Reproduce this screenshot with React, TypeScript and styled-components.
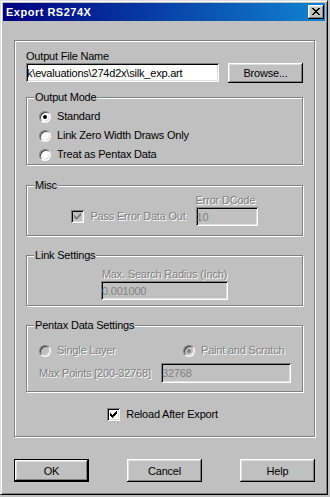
import * as React from "react";
import styled, { createGlobalStyle } from "styled-components";

const GlobalStyle = createGlobalStyle`
  html, body {
    margin: 0;
    padding: 0;
    background: #c0c0c0;
  }
  body {
    font-family: "Liberation Sans", Arial, sans-serif;
    font-size: 11px;
    letter-spacing: -0.2px;
    color: #000;
  }
`;

const Window = styled.div`
  box-sizing: border-box;
  width: 328px;
  height: 495px;
  padding: 2px;
  background: #c0c0c0;
  border: 1px solid;
  border-color: #dfdfdf #000 #000 #dfdfdf;
  box-shadow: inset 1px 1px #fff, inset -1px -1px #808080;
  display: flex;
  flex-direction: column;
`;

const TitleBar = styled.div`
  height: 18px;
  display: flex;
  align-items: center;
  justify-content: space-between;
  padding: 0 1px 0 3px;
  background: linear-gradient(to right, #000080, #1084d0);
`;

const Title = styled.span`
  color: #fff;
  font-weight: bold;
  font-size: 11px;
  letter-spacing: 0.5px;
  line-height: 18px;
`;

const Raised = `
  box-shadow: inset -1px -1px #000, inset 1px 1px #fff, inset -2px -2px #808080, inset 2px 2px #dfdfdf;
`;

const CloseButton = styled.div`
  width: 16px;
  height: 14px;
  box-sizing: border-box;
  background: #c0c0c0;
  ${Raised}
  display: flex;
  align-items: center;
  justify-content: center;
  padding: 0 0 1px 0;
`;

const Body = styled.div`
  padding: 19px 10px 0 11px;
  display: flex;
  flex-direction: column;
`;

const Group = styled.div<{ $top?: number; $pad: string; $w?: number }>`
  position: relative;
  box-sizing: border-box;
  width: ${(p) => (p.$w ? `${p.$w}px` : "auto")};
  border: 1px solid #808080;
  box-shadow: inset 1px 1px #fff, 1px 1px #fff;
  margin-top: ${(p) => p.$top ?? 0}px;
  padding: ${(p) => p.$pad};
  display: flex;
  flex-direction: column;
`;

const Legend = styled.span`
  position: absolute;
  top: -7px;
  left: 7px;
  padding: 0 1px;
  line-height: 13px;
  background: #c0c0c0;
`;

const Label = styled.div<{ $disabled?: boolean }>`
  line-height: 13px;
  white-space: nowrap;
  color: ${(p) => (p.$disabled ? "#808080" : "#000")};
  text-shadow: ${(p) => (p.$disabled ? "1px 1px 0 #fff" : "none")};
`;

const Edit = styled.input<{ $w: number; $h?: number; $disabled?: boolean }>`
  box-sizing: border-box;
  width: ${(p) => p.$w}px;
  height: ${(p) => p.$h ?? 19}px;
  border: none;
  outline: none;
  margin: 0;
  padding: 0 2px 0 1px;
  font: inherit;
  letter-spacing: inherit;
  color: ${(p) => (p.$disabled ? "#808080" : "#000")};
  background: ${(p) => (p.$disabled ? "#c0c0c0" : "#fff")};
  box-shadow: inset 1px 1px #808080, inset -1px -1px #fff, inset 2px 2px #000, inset -2px -2px #dfdfdf;
`;

const Button = styled.div<{ $w: number; $h: number; $default?: boolean }>`
  box-sizing: border-box;
  width: ${(p) => p.$w}px;
  height: ${(p) => p.$h}px;
  background: #c0c0c0;
  border: ${(p) => (p.$default ? "1px solid #000" : "none")};
  ${Raised}
  display: flex;
  align-items: center;
  justify-content: center;
  font-size: 11px;
`;

const FileRow = styled.div`
  display: flex;
  align-items: flex-start;
  justify-content: space-between;
`;

const OptionRow = styled.div<{ $h?: number }>`
  display: flex;
  align-items: center;
  gap: 6px;
  height: ${(p) => p.$h ?? 19}px;
`;

const RadioCircle = styled.span<{ $disabled?: boolean }>`
  box-sizing: border-box;
  width: 12px;
  height: 12px;
  border-radius: 50%;
  border: 1px solid;
  border-color: #808080 #fff #fff #808080;
  box-shadow: inset 1px 1px #404040, inset -1px -1px #dfdfdf;
  background: ${(p) => (p.$disabled ? "#c0c0c0" : "#fff")};
  display: flex;
  align-items: center;
  justify-content: center;
  flex: none;
`;

const RadioDot = styled.span<{ $disabled?: boolean }>`
  width: 4px;
  height: 4px;
  border-radius: 50%;
  background: ${(p) => (p.$disabled ? "#808080" : "#000")};
`;

const CheckBox = styled.span<{ $disabled?: boolean }>`
  box-sizing: border-box;
  width: 13px;
  height: 13px;
  flex: none;
  background: ${(p) => (p.$disabled ? "#c0c0c0" : "#fff")};
  box-shadow: inset 1px 1px #808080, inset -1px -1px #fff, inset 2px 2px #000, inset -2px -2px #dfdfdf;
  display: block;
`;

const MiscRow = styled.div`
  display: flex;
  align-items: flex-end;
  justify-content: center;
  gap: 10px;
`;

const Column = styled.div<{ $center?: boolean }>`
  display: flex;
  flex-direction: column;
  align-items: ${(p) => (p.$center ? "center" : "flex-start")};
`;

const PentaxRadios = styled.div`
  display: grid;
  grid-template-columns: 144px auto;
  height: 19px;
`;

const PentaxPoints = styled.div`
  display: flex;
  align-items: center;
  justify-content: space-between;
  margin-top: 3px;
`;

const ReloadRow = styled.div`
  display: flex;
  justify-content: center;
  align-items: center;
  gap: 6px;
  margin-top: 16px;
  padding-right: 4px;
  height: 13px;
`;

const ButtonRow = styled.div`
  display: flex;
  justify-content: space-between;
  width: 301px;
  margin-top: 22px;
`;

const CloseGlyph = () => (
  <svg width="8" height="7" viewBox="0 0 8 7" shapeRendering="crispEdges">
    <path
      fill="#000"
      d="M0 0h2v1h-2z M6 0h2v1h-2z M1 1h2v1h-2z M5 1h2v1h-2z M2 2h4v1h-4z M3 3h2v1h-2z M2 4h4v1h-4z M1 5h2v1h-2z M5 5h2v1h-2z M0 6h2v1h-2z M6 6h2v1h-2z"
    />
  </svg>
);

const Check = ({ color }: { color: string }) => (
  <svg width="13" height="13" viewBox="0 0 13 13" shapeRendering="crispEdges">
    <path
      fill={color}
      d="M3 5h1v1h1v1h1v-1h1v-1h1v-1h1v-1h1v3h-1v1h-1v1h-1v1h-1v1h-1v-1h-1v-1h-1z"
    />
  </svg>
);

const Radio = ({ label, checked, disabled }: { label: string; checked?: boolean; disabled?: boolean }) => (
  <OptionRow>
    <RadioCircle $disabled={disabled}>{checked && <RadioDot $disabled={disabled} />}</RadioCircle>
    <Label $disabled={disabled}>{label}</Label>
  </OptionRow>
);

export default function App() {
  return (
    <>
      <GlobalStyle />
      <Window>
        <TitleBar>
          <Title>Export RS274X</Title>
          <CloseButton>
            <CloseGlyph />
          </CloseButton>
        </TitleBar>
        <Body>
          <Group $w={301} $pad="9px 11px 15px 11px">
            <Label>Output File Name</Label>
            <FileRow>
              <Edit $w={193} readOnly value="k\evaluations\274d2x\silk_exp.art" />
              <Button $w={75} $h={20}>Browse...</Button>
            </FileRow>

            <Group $top={14} $pad="9px 0 0 12px">
              <Legend>Output Mode</Legend>
              <Radio label="Standard" checked />
              <Radio label="Link Zero Width Draws Only" />
              <Radio label="Treat as Pentax Data" />
            </Group>

            <Group $top={20} $pad="8px 0 9px 0">
              <Legend>Misc</Legend>
              <MiscRow>
                <OptionRow>
                  <CheckBox $disabled>
                    <Check color="#808080" />
                  </CheckBox>
                  <Label $disabled>Pass Error Data Out</Label>
                </OptionRow>
                <Column>
                  <Label $disabled>Error DCode</Label>
                  <Edit $w={62} $disabled readOnly value="10" />
                </Column>
              </MiscRow>
            </Group>

            <Group $top={19} $pad="12px 0 5px 0">
              <Legend>Link Settings</Legend>
              <Column $center>
                <Label $disabled>Max. Search Radius (Inch)</Label>
                <Edit $w={127} $disabled readOnly value="0.001000" />
              </Column>
            </Group>

            <Group $top={19} $pad="15px 11px 8px 12px">
              <Legend>Pentax Data Settings</Legend>
              <PentaxRadios>
                <Radio label="Single Layer" disabled />
                <Radio label="Paint and Scratch" checked disabled />
              </PentaxRadios>
              <PentaxPoints>
                <Label $disabled>Max Points [200-32768]</Label>
                <Edit $w={130} $h={20} $disabled readOnly value="32768" />
              </PentaxPoints>
            </Group>

            <ReloadRow>
              <CheckBox>
                <Check color="#000" />
              </CheckBox>
              <Label>Reload After Export</Label>
            </ReloadRow>
          </Group>

          <ButtonRow>
            <Button $w={75} $h={23} $default>OK</Button>
            <Button $w={75} $h={23}>Cancel</Button>
            <Button $w={75} $h={23}>Help</Button>
          </ButtonRow>
        </Body>
      </Window>
    </>
  );
}
